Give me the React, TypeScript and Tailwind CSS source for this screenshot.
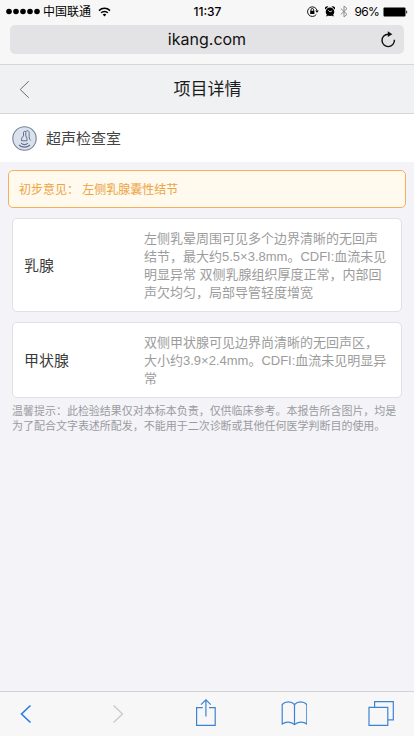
import type { ReactNode } from 'react';

interface ReportItem {
  name: string;
  lines: string[];
}

const reportItems: ReportItem[] = [
  {
    name: '乳腺',
    lines: [
      '左侧乳晕周围可见多个边界清晰的无回声',
      '结节，最大约5.5×3.8mm。CDFI:血流未见',
      '明显异常 双侧乳腺组织厚度正常，内部回',
      '声欠均匀，局部导管轻度增宽',
    ],
  },
  {
    name: '甲状腺',
    lines: [
      '双侧甲状腺可见边界尚清晰的无回声区，',
      '大小约3.9×2.4mm。CDFI:血流未见明显异',
      '常',
    ],
  },
];

const tips = [
  '温馨提示：此检验结果仅对本标本负责，仅供临床参考。本报告所含图片，均是',
  '为了配合文字表述所配发，不能用于二次诊断或其他任何医学判断目的使用。',
];

function StatusBar() {
  return (
    <div className="grid h-5 grid-cols-[1fr_auto_1fr] items-center pl-[6px] pr-[6px] pt-px text-black">
      <div className="flex items-center">
        <svg width="34" height="7" viewBox="0 0 34 7">
          {[3, 10, 17, 24, 31].map((cx) => (
            <circle key={cx} cx={cx} cy="3.5" r="2.8" />
          ))}
        </svg>
        <span className="ml-[3px] pt-px text-[12px] leading-5">中国联通</span>
        <svg className="ml-[7px]" width="13" height="10" viewBox="0 0 13 10" fill="none" stroke="black">
          <path d="M1 3.6a7.8 7.8 0 0 1 11 0" strokeWidth="1.5" />
          <path d="M3.1 5.8a4.8 4.8 0 0 1 6.8 0" strokeWidth="1.5" />
          <path d="M6.5 9.4 4.7 7.6a2.6 2.6 0 0 1 3.6 0z" fill="black" stroke="none" />
        </svg>
      </div>
      <span className="pl-px font-['Inter','Liberation_Sans',sans-serif] text-[12px] font-medium leading-5">11:37</span>
      <div className="flex items-center justify-end">
        {/* Rotation lock */}
        <svg width="12" height="11" viewBox="0 0 12 11" fill="none" stroke="black">
          <path d="M9.3 8.4A4.8 4.8 0 1 1 10 4.4" strokeWidth="0.9" />
          <path d="M8.2 4.6h3.6L10 6.8z" fill="black" stroke="none" />
          <rect x="3.2" y="4.8" width="4.2" height="3.2" fill="black" stroke="none" />
          <path d="M4 5V3.8a1.3 1.3 0 0 1 2.6 0V5" strokeWidth="0.9" />
        </svg>
        {/* Alarm */}
        <svg className="ml-[6px]" width="10" height="11" viewBox="0 0 10 11">
          <circle cx="5" cy="5.8" r="4.3" />
          <path d="M.2 3.4A2.2 2.2 0 0 1 3.4.6zM9.8 3.4A2.2 2.2 0 0 0 6.6.6zM2.2 8.3 1 10.3h1.3l1-1.4zM7.8 8.3 9 10.3H7.7l-1-1.4z" />
          <path d="M3.3 4.3 5 5.9l2.2-1.1" fill="none" stroke="#f7f7f7" strokeWidth="0.8" />
        </svg>
        {/* Bluetooth */}
        <svg className="ml-[5px]" width="8" height="13" viewBox="0 0 8 13" fill="none" stroke="#8c8c8c" strokeWidth="1">
          <path d="m.8 3.5 6.2 5.8L4 12V1l3 2.7L.8 9.5" />
        </svg>
        <span className="ml-[6px] font-['Inter','Liberation_Sans',sans-serif] text-[12px] leading-5 tracking-[-0.7px]">96%</span>
        <svg className="ml-[4px]" width="25" height="10" viewBox="0 0 25 10">
          <rect x="0.5" y="0.5" width="22" height="9" rx="1" />
          <path d="M23.3 3.2c1.3.4 1.3 3.2 0 3.6z" />
        </svg>
      </div>
    </div>
  );
}

function AddressBar() {
  return (
    <div className="mx-[10px] mt-[5px] grid h-[29px] grid-cols-[1fr_auto_1fr] items-center rounded-[5px] bg-[#e3e3e5] pr-2">
      <span />
      <span className="pb-px pl-2 font-['Inter','Liberation_Sans',sans-serif] text-[16px] leading-6 text-[#111]">ikang.com</span>
      <svg className="justify-self-end" width="15" height="17" viewBox="0 0 15 17" fill="none" stroke="#111" strokeWidth="1.4">
        <path d="M13.4 8.8A6.2 6.2 0 1 1 7.2 3.2H9" />
        <path d="M6.8.3v5.8l4.5-2.8z" fill="#111" stroke="none" />
      </svg>
    </div>
  );
}

function PageHeader() {
  return (
    <header className="grid h-[50px] grid-cols-[1fr_auto_1fr] items-center border-y border-[#d5d6d8] bg-[#eff1f3]">
      <svg className="ml-[19px]" width="11" height="19" viewBox="0 0 11 19" fill="none" stroke="#6d6d6d" strokeWidth="1">
        <path d="M9.8 1.2 1.2 9.5l8.6 8.3" />
      </svg>
      <h1 className="pl-px pt-[2px] text-[17px] leading-6 text-[#1c1c1c]">项目详情</h1>
    </header>
  );
}

function Department() {
  return (
    <div className="flex h-12 items-center bg-white pl-3">
      <svg width="25" height="25" viewBox="0 0 25 25" fill="none" stroke="#5f7090">
        <circle cx="12.5" cy="12.5" r="11.7" fill="#dce2eb" stroke="#76839c" strokeWidth="1.1" />
        <path d="M9.6 14.8v-2.6l1.9-2.3V6.3c0-1.3 2.3-1.3 2.3 0v3.6l1.2 2.3v2.6z" strokeWidth="1" />
        <path d="M13.4 5.6c3-2 4 0 3.8 2.6-.2 3 0 5 1.6 6.3" strokeWidth="1" />
        <path d="M9 17.2c2 1.7 5 1.7 7 0M7 19c3 2.8 8 2.8 11 0" strokeWidth="1.1" />
      </svg>
      <h2 className="ml-[9px] pt-[2px] text-[15px] leading-6 text-[#444]">超声检查室</h2>
    </div>
  );
}

function ReportCard({ item }: { item: ReportItem }) {
  return (
    <div className="flex items-center rounded-[5px] border border-[#e0e0e6] bg-white pb-[9px] pl-[11px] pt-[11px]">
      <h3 className="w-[120px] shrink-0 text-[15px] leading-6 text-[#3a3a3a]">{item.name}</h3>
      <div className="whitespace-nowrap text-[13px] leading-[18px] text-[#9c9c9c]">
        {item.lines.map((line) => (
          <p key={line}>{line}</p>
        ))}
      </div>
    </div>
  );
}

function ToolbarIcon({ children }: { children: ReactNode }) {
  return (
    <svg width="28" height="30" viewBox="0 0 28 30" fill="none" stroke="#3d83d3" strokeWidth="1.2">
      {children}
    </svg>
  );
}

function Toolbar() {
  return (
    <nav className="flex h-[45px] items-center justify-between border-t border-[#d3d3d5] bg-[#f7f7f8] pl-3 pr-[18px]">
      <ToolbarIcon>
        <path d="m18.5 6.5-9 8.5 9 8.5" stroke="#2b7be4" strokeWidth="1.6" />
      </ToolbarIcon>
      <ToolbarIcon>
        <path d="m12.5 6.5 9 8.5-9 8.5" stroke="#cbcbcf" strokeWidth="1.4" />
      </ToolbarIcon>
      <ToolbarIcon>
        <path d="M12.8 8.7H6.6v17.7h18.6V8.7H19M15.9 17.5V1M11 5.7l4.9-4.9 4.9 4.9" />
      </ToolbarIcon>
      <ToolbarIcon>
        <path d="M15.5 5.5v20M15.5 5.5C12.4 2 6.3 2 3.2 5.5v19.4c3.5-2.6 8.9-2.6 12.3.8 3.4-3.4 8.8-3.4 12.3-.8V5.5c-3.1-3.5-9.2-3.5-12.3 0" />
      </ToolbarIcon>
      <ToolbarIcon>
        <path d="M1 8.3h18.8v18.1H1zM6.6 8V2.6h18.7v18.3H20" />
      </ToolbarIcon>
    </nav>
  );
}

export default function App() {
  return (
    <div className="flex h-[736px] w-[414px] flex-col overflow-hidden bg-[#f3f3f8] font-['Liberation_Sans','Noto_Sans_CJK_SC',sans-serif]">
      <div className="h-16 shrink-0 bg-[#f7f7f7]">
        <StatusBar />
        <AddressBar />
      </div>
      <PageHeader />
      <Department />

      <main className="flex-1">
        <div className="mx-2 mt-2 flex h-[38px] items-center rounded-[5px] border border-[#f5b05a] bg-[#fff9ee] pl-[10px] pt-px text-[12px] text-[#eca43f]">
          初步意见： 左侧乳腺囊性结节
        </div>
        <div className="mx-3 mt-[10px] flex flex-col gap-[10px]">
          {reportItems.map((item) => (
            <ReportCard key={item.name} item={item} />
          ))}
        </div>
        <div className="ml-3 mt-[6px] whitespace-nowrap text-[11px] leading-[15px] tracking-[-0.02px] text-[#9b9b9f]">
          {tips.map((line) => (
            <p key={line}>{line}</p>
          ))}
        </div>
      </main>

      <Toolbar />
    </div>
  );
}
